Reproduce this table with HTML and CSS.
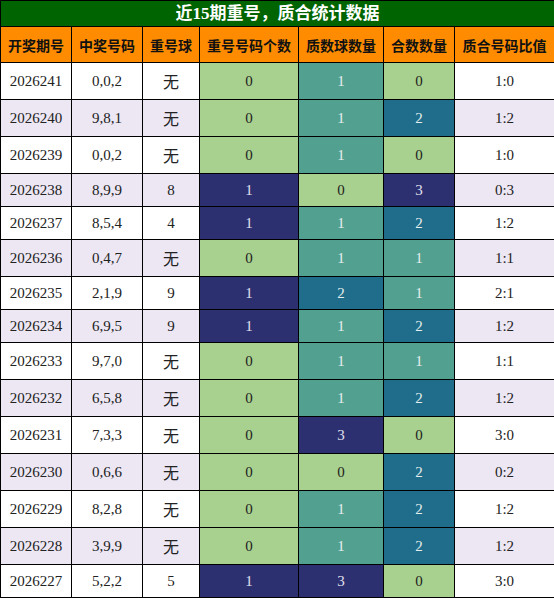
FILE: index.html
```html
<!DOCTYPE html>
<html lang="zh-CN">
<head>
    <meta charset="UTF-8">
    <title>近15期重号，质合统计数据</title>
    <link rel="stylesheet" href="styles.css">
</head>
<body>
    <table class="stats">
        <colgroup>
            <col class="c-issue">
            <col class="c-code">
            <col class="c-repeat">
            <col class="c-count">
            <col class="c-prime">
            <col class="c-comp">
            <col class="c-ratio">
        </colgroup>
        <thead>
            <tr class="title-row"><th colspan="7">近15期重号，质合统计数据</th></tr>
            <tr class="head-row">
                <th>开奖期号</th><th>中奖号码</th><th>重号球</th><th>重号号码个数</th><th>质数球数量</th><th>合数数量</th><th>质合号码比值</th>
            </tr>
        </thead>
        <tbody>
            <tr class="tall"><td>2026241</td><td>0,0,2</td><td class="none">无</td><td class="lv0">0</td><td class="lv1">1</td><td class="lv0">0</td><td>1:0</td></tr>
            <tr class="tall alt"><td>2026240</td><td>9,8,1</td><td class="none">无</td><td class="lv0">0</td><td class="lv1">1</td><td class="lv2">2</td><td>1:2</td></tr>
            <tr class="tall"><td>2026239</td><td>0,0,2</td><td class="none">无</td><td class="lv0">0</td><td class="lv1">1</td><td class="lv0">0</td><td>1:0</td></tr>
            <tr class="alt"><td>2026238</td><td>8,9,9</td><td>8</td><td class="lv3">1</td><td class="lv0">0</td><td class="lv3">3</td><td>0:3</td></tr>
            <tr><td>2026237</td><td>8,5,4</td><td>4</td><td class="lv3">1</td><td class="lv1">1</td><td class="lv2">2</td><td>1:2</td></tr>
            <tr class="tall alt"><td>2026236</td><td>0,4,7</td><td class="none">无</td><td class="lv0">0</td><td class="lv1">1</td><td class="lv1">1</td><td>1:1</td></tr>
            <tr><td>2026235</td><td>2,1,9</td><td>9</td><td class="lv3">1</td><td class="lv2">2</td><td class="lv1">1</td><td>2:1</td></tr>
            <tr class="alt"><td>2026234</td><td>6,9,5</td><td>9</td><td class="lv3">1</td><td class="lv1">1</td><td class="lv2">2</td><td>1:2</td></tr>
            <tr class="tall"><td>2026233</td><td>9,7,0</td><td class="none">无</td><td class="lv0">0</td><td class="lv1">1</td><td class="lv1">1</td><td>1:1</td></tr>
            <tr class="tall alt"><td>2026232</td><td>6,5,8</td><td class="none">无</td><td class="lv0">0</td><td class="lv1">1</td><td class="lv2">2</td><td>1:2</td></tr>
            <tr class="tall"><td>2026231</td><td>7,3,3</td><td class="none">无</td><td class="lv0">0</td><td class="lv3">3</td><td class="lv0">0</td><td>3:0</td></tr>
            <tr class="tall alt"><td>2026230</td><td>0,6,6</td><td class="none">无</td><td class="lv0">0</td><td class="lv0">0</td><td class="lv2">2</td><td>0:2</td></tr>
            <tr class="tall"><td>2026229</td><td>8,2,8</td><td class="none">无</td><td class="lv0">0</td><td class="lv1">1</td><td class="lv2">2</td><td>1:2</td></tr>
            <tr class="tall alt"><td>2026228</td><td>3,9,9</td><td class="none">无</td><td class="lv0">0</td><td class="lv1">1</td><td class="lv2">2</td><td>1:2</td></tr>
            <tr><td>2026227</td><td>5,2,2</td><td>5</td><td class="lv3">1</td><td class="lv3">3</td><td class="lv0">0</td><td>3:0</td></tr>
        </tbody>
    </table>
</body>
</html>
```

FILE: styles.css
```css
body, html {
    margin: 0;
    padding: 0;
    background-color: #fff;
}
.stats {
    width: 554px;
    table-layout: fixed;
    border-collapse: collapse;
    font-family: 'Liberation Serif', 'Noto Sans CJK SC', serif;
    font-size: 15px;
    color: #222;
}
.c-issue { width: 71px; }
.c-code { width: 71px; }
.c-repeat { width: 57px; }
.c-count { width: 99px; }
.c-prime { width: 85px; }
.c-comp { width: 71px; }
.c-ratio { width: 100px; }
.stats th,
.stats td {
    border: 1px solid #000;
    padding: 0;
    text-align: center;
    white-space: nowrap;
    overflow: hidden;
}
.title-row th {
    height: 25px;
    background-color: #006400;
    color: #fff;
    font-size: 17px;
    font-weight: 700;
    line-height: 25px;
}
.head-row th {
    height: 35px;
    background-color: #ff8c00;
    color: #111;
    font-size: 14px;
    font-weight: 700;
}
.stats tbody tr td {
    height: 32px;
    line-height: 20px;
}
.stats tbody tr.tall td {
    height: 36px;
}
.alt td {
    background-color: #ede7f4;
}
.none {
    font-family: 'Noto Sans CJK SC', sans-serif;
    font-size: 16px;
}
.stats td.lv0 {
    background-color: #a8d08e;
    color: #222;
}
.stats td.lv1 {
    background-color: #52a08f;
    color: #e6eeee;
}
.stats td.lv2 {
    background-color: #1f6d8a;
    color: #e6eeee;
}
.stats td.lv3 {
    background-color: #2d3070;
    color: #e0e0ee;
}
```
